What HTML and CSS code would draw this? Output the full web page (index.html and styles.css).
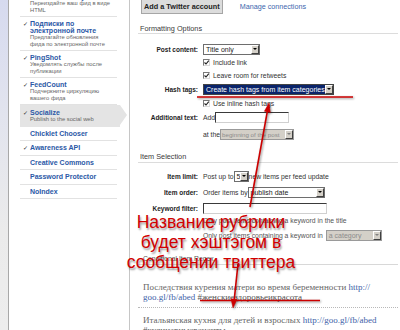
FILE: index.html
```html
<!DOCTYPE html>
<html>
<head>
<meta charset="utf-8">
<link rel="stylesheet" href="styles.css">
</head>
<body>
<div class="page">
  <div class="strip"></div>
  <aside class="sidebar">
    <ul class="nav">
      <li class="item first"><span class="t">BrowserFriendly</span><span class="d">Переиздайте ваш фид в виде<br>HTML</span></li>
      <li class="item chk"><span class="t">Подписки по<br>электронной почте</span><span class="d">Предлагайте обновления<br>фида по электронной почте</span></li>
      <li class="item chk"><span class="t">PingShot</span><span class="d">Уведомлять службы после<br>публикации</span></li>
      <li class="item chk"><span class="t">FeedCount</span><span class="d">Подчеркните циркуляцию<br>вашего фида</span></li>
      <li class="item chk active"><span class="t">Socialize</span><span class="d">Publish to the social web</span></li>
      <li class="item single"><span class="t">Chicklet Chooser</span></li>
      <li class="item single chk"><span class="t">Awareness API</span></li>
      <li class="item single"><span class="t">Creative Commons</span></li>
      <li class="item single"><span class="t">Password Protector</span></li>
      <li class="item single"><span class="t">NoIndex</span></li>
    </ul>
  </aside>
  <main class="main">
    <div class="topbar">
      <span class="btn">Add a Twitter account</span>
      <a class="link">Manage connections</a>
    </div>
    <h3 class="section s1">Formatting Options</h3>
    <div class="form f1">
      <div class="row h13"><span class="lbl">Post content:</span><span class="ctl"><span class="sel w-title"><span class="val">Title only</span><span class="arr"></span></span></span></div>
      <div class="row h13"><span class="lbl"></span><span class="ctl"><span class="cb"><svg width="7" height="7" viewBox="0 0 7 7"><path d="M1.5 3.5 L3 5 L5.8 1.6" fill="none" stroke="#222" stroke-width="1.1"/></svg></span>Include link</span></div>
      <div class="row h13"><span class="lbl"></span><span class="ctl"><span class="cb"><svg width="7" height="7" viewBox="0 0 7 7"><path d="M1.5 3.5 L3 5 L5.8 1.6" fill="none" stroke="#222" stroke-width="1.1"/></svg></span>Leave room for retweets</span></div>
      <div class="row h15"><span class="lbl">Hash tags:</span><span class="ctl"><span class="sel hl w-hash"><span class="val">Create hash tags from item categories</span><span class="arr"></span></span></span></div>
      <div class="row h13"><span class="lbl"></span><span class="ctl"><span class="cb"><svg width="7" height="7" viewBox="0 0 7 7"><path d="M1.5 3.5 L3 5 L5.8 1.6" fill="none" stroke="#222" stroke-width="1.1"/></svg></span>Use inline hash tags</span></div>
      <div class="row h15"><span class="lbl">Additional text:</span><span class="ctl">Add <span class="inp w-add"></span></span></div>
      <div class="row h14 mt25"><span class="lbl"></span><span class="ctl">at the <span class="sel dis w-pos"><span class="val small">beginning of the post</span><span class="arr"></span></span></span></div>
    </div>
    <h3 class="section s2">Item Selection</h3>
    <div class="form f2">
      <div class="row h14"><span class="lbl">Item limit:</span><span class="ctl">Post up to <span class="sel w-num"><span class="val">5</span><span class="arr"></span></span> new items per feed update</span></div>
      <div class="row h14 mt2"><span class="lbl">Item order:</span><span class="ctl">Order items by <span class="sel w-ord"><span class="val">publish date</span><span class="arr"></span></span></span></div>
      <div class="row h14 mt2"><span class="lbl">Keyword filter:</span><span class="ctl"><span class="inp w-kw"></span></span></div>
      <div class="row h10"><span class="lbl"></span><span class="ctl muted">Only post items containing a keyword in the title</span></div>
      <div class="row h14 mt3"><span class="lbl"></span><span class="ctl muted">Only post items containing a keyword in <span class="sel dis w-cat"><span class="val">a category</span><span class="arr"></span></span></span></div>
      <div class="row h10 mt11 wide"><span class="ctl muted">Conditional Item Regex</span></div>
    </div>
    <div class="posts">
      <p class="post">Последствия курения матери во время беременности <a class="pl">http://</a><br><a class="pl">goo.gl/fb/abed</a> <span class="tag">#женскиездоровьеикрасота</span></p>
      <p class="post p2">Итальянская кухня для детей и взрослых <a class="pl">http://goo.gl/fb/abed</a><br><span class="tag">#кулинарныерецепты</span></p>
    </div>
  </main>
</div>

<svg class="marks" width="400" height="330" viewBox="0 0 400 330">
  <g stroke="#cc0000" stroke-width="1.6" fill="#cc0000">
    <line x1="197" y1="97" x2="353" y2="97"/>
    <line x1="200" y1="300.5" x2="320" y2="300.5"/>
    <line x1="250" y1="207" x2="267.6" y2="110"/>
    <polygon points="269,103 270.3,112.4 264.4,111.3" stroke-width="0.5"/>
    <line x1="238" y1="264" x2="234.2" y2="300"/>
    <polygon points="233,308 237,299.4 231,298.7" stroke-width="0.5"/>
  </g>
</svg>
<div class="note">Название рубрики<br>будет хэштэгом в<br>сообщении твиттера</div>
</body>
</html>
```

FILE: styles.css
```css
* { box-sizing: border-box; margin: 0; padding: 0; }
html, body { width: 400px; height: 330px; overflow: hidden; background: #fff; }
body { font-family: "Liberation Sans", Arial, sans-serif; position: relative; color: #333; }

.page { display: flex; height: 330px; }

.strip {
  width: 9px; flex: none;
  background: linear-gradient(#d6daef 0%, #e2e4ee 35%, #ebebeb 70%, #ededed 100%);
  border-right: 1px solid #a8a8a8;
}

.sidebar {
  width: 121px; flex: none;
  border-right: 1px solid #c6c6c6;
  padding: 0 12px 0 11px;
}
.nav { list-style: none; }
.item {
  position: relative;
  padding: 3px 0 3px 10px;
  border-bottom: 1px solid #e2e2e2;
}
.item.first { margin-top: -10px; }
.item .t { display: block; font-weight: bold; font-size: 7px; line-height: 7px; color: #2b58a6; white-space: nowrap; }
.item .d { display: block; font-size: 5.8px; line-height: 6.5px; color: #666; white-space: nowrap; }
.item.chk::before {
  content: "✓"; position: absolute; left: 3px; top: 3px;
  font-family: "DejaVu Sans", sans-serif; font-size: 6px; line-height: 7px; color: #333;
}
.item.active {
  background: #e4e4e4; border-bottom-color: transparent;
  padding-top: 4px; margin-right: -3px;
}
.item.active::before { top: 4px; }
.item.active::after {
  content: ""; position: absolute; right: -7px; top: 0;
  border-left: 7px solid #e4e4e4;
  border-top: 10.75px solid transparent;
  border-bottom: 10.75px solid transparent;
}
.item.single { padding-bottom: 3.5px; }

.main { flex: 1; padding: 0 2px 0 10px; min-width: 0; }

.topbar { display: flex; align-items: center; margin-top: -1px; height: 15px; }
.btn {
  display: inline-flex; align-items: center; height: 15px;
  margin-left: 1px; padding: 0 2px;
  background: #dcdcdc; border: 1px solid #a6a6a6;
  font-weight: bold; font-size: 7.3px; color: #222; white-space: nowrap;
}
.link { margin-left: 17px; font-size: 7.2px; color: #3d66ae; white-space: nowrap; }

.section {
  font-weight: normal; font-size: 7.3px; line-height: 9px; color: #3a3a3a;
  padding-bottom: 0.5px; border-bottom: 1px solid #dcdcdc; margin-left: -2px; padding-left: 2px;
}
.s1 { margin-top: 9.5px; }
.s2 { margin-top: 10.5px; padding-bottom: 1px; }

.f1 { margin-top: 8.5px; }
.f2 { margin-top: 6.5px; }

.row { display: grid; grid-template-columns: 58px 1fr; column-gap: 5px; align-items: center; }
.row.wide { grid-template-columns: 1fr; padding-left: 3px; }
.h10 { height: 10px; } .h13 { height: 13px; } .h14 { height: 14px; } .h15 { height: 15px; }
.mt2 { margin-top: 2px; } .mt25 { margin-top: 2.5px; } .mt3 { margin-top: 3px; } .mt11 { margin-top: 11px; }

.lbl { text-align: right; font-weight: bold; font-size: 6.5px; color: #222; white-space: nowrap; }
.ctl { display: flex; align-items: center; font-size: 6.8px; color: #333; white-space: nowrap; }
.muted { color: #555; }

.cb {
  display: inline-block; width: 7px; height: 7px; margin-right: 3px; flex: none;
  border: 1px solid; border-color: #7a7a7a #dadada #dadada #7a7a7a; background: #fff;
}
.cb svg { display: block; margin: -1px 0 0 -1px; }

.sel {
  display: inline-flex; align-items: center; height: 11px; flex: none;
  border: 1px solid #6e6e6e; background: #fff; font-size: 7px; color: #222;
}
.ctl > .sel, .ctl > .inp { margin-left: 2px; }
.ctl > .sel:first-child, .ctl > .inp:first-child { margin-left: 0; }
.sel .val { flex: 1; padding-left: 2px; line-height: 9px; overflow: hidden; white-space: nowrap; }
.sel .val.small { font-size: 6.2px; padding-left: 1px; }
.sel .arr {
  position: relative; flex: none; width: 8px; height: 9px;
  background: #d4d0c8; border: 1px solid; border-color: #fff #404040 #404040 #fff;
}
.sel .arr::after {
  content: ""; position: absolute; left: 1px; top: 2.5px;
  border-left: 2px solid transparent; border-right: 2px solid transparent; border-top: 2px solid #000;
}
.sel.hl { border-color: #444; }
.sel.hl .val { background: #0a246a; color: #fff; height: 9px; }
.sel.dis { background: #d4d0c8; border-color: #9a9a9a; }
.sel.dis .val { color: #8c8c8c; }
.sel.dis .arr::after { border-top-color: #808080; }

.w-title { width: 57px; }
.w-hash { width: 131px; }
.w-pos { width: 74px; }
.w-num { width: 15px; }
.w-ord { width: 77px; }
.w-cat { width: 56px; margin-left: 3px !important; }

.inp {
  display: inline-block; height: 11px; flex: none; background: #fff;
  border: 1px solid; border-color: #3a3a3a #d0d0d0 #d0d0d0 #3a3a3a;
}
.w-add { width: 74px; }
.w-kw { width: 124px; }

.posts { margin-top: 1px; border-top: 1px solid #d8d8d8; margin-left: -2px; }
.post {
  font-family: "Liberation Serif", "Times New Roman", serif;
  font-size: 9px; line-height: 10px; color: #666;
  padding: 17px 0 5px 5px; border-bottom: 1px dotted #b8b8b8; white-space: nowrap;
}
.post.p2 { padding-top: 7px; border-bottom: none; }
.pl { color: #3e62a8; }
.tag { color: #555; }

.marks { position: absolute; left: 0; top: 0; filter: drop-shadow(1px 1px 1px rgba(0,0,0,0.45)); pointer-events: none; }

.note {
  position: absolute; left: 111px; top: 212px; width: 200px;
  text-align: center; font-family: "Liberation Sans", Arial, sans-serif;
  font-size: 17.5px; line-height: 20px; color: #d10000;
  text-shadow: 1px 2px 2px rgba(0,0,0,0.4);
  white-space: nowrap;
}
```
